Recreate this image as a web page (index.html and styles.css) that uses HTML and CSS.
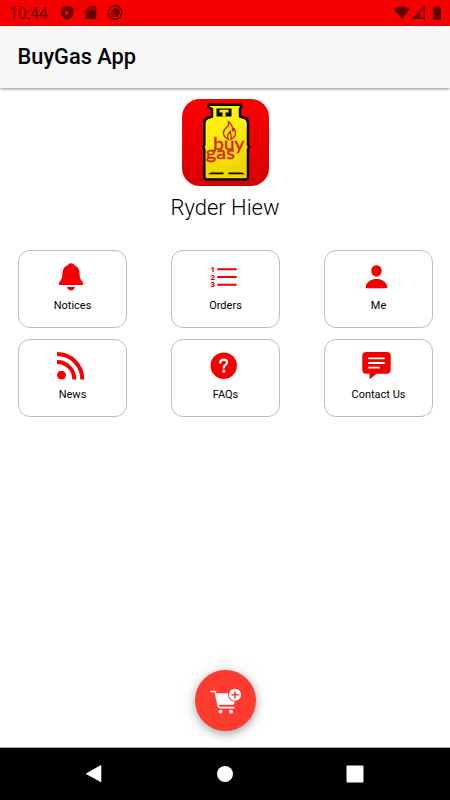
FILE: index.html
```html
<!DOCTYPE html>
<html lang="en">
<head>
<meta charset="utf-8">
<title>BuyGas App</title>
<link rel="stylesheet" href="styles.css">
</head>
<body>
<div class="status">
  <span class="clock">10:44</span>
  <svg class="status-icons" width="64" height="16" viewBox="0 0 64 16">
    <path fill="#650000" fill-rule="evenodd" d="M7.200 .7 13.200 3v4.500c0 3.600-2.500 6-6 7.400-3.500-1.400-6-3.800-6-7.400V3ZM5 4.800v5.800l5-2.900Z"/>
    <path fill="#650000" fill-rule="evenodd" d="M30 1h5q1.200 0 1.200 1.200v10.600q0 1.200-1.200 1.200h-8.200q-1.200 0-1.200-1.200V5.500ZM29.300 2.500v3h1.100v-3Zm2.100 0v3h1.100v-3Zm2.100 0v3h1.100v-3Z"/>
    <circle cx="55.200" cy="7.500" r="6.700" fill="none" stroke="#650000" stroke-width="1.400"/>
    <path d="M51.800 6.500A3.700 3.700 0 0 0 56.500 11.200" fill="none" stroke="#650000" stroke-width="1.200"/>
    <path d="M52.500 5A3.800 3.800 0 0 1 59 9.500L58.300 10.800Z" fill="#650000"/>
    <path d="M52 6 58 11.500" stroke="#650000" stroke-width="1.200"/>
  </svg>
  <svg class="signals" width="50" height="16" viewBox="0 0 50 16">
    <path fill="#650000" d="M1 4.300Q8.500-2.200 16.500 4.300L8.800 14ZM44 1.200h2.500v1.200H48v12h-7.800v-12H42.500V1.200Z"/>
    <path d="M20 13.300 31.300 2v11.300Z" fill="none" stroke="#650000" stroke-width="1.200"/>
    <path d="M20 13.500 27.500 6v7.500Z" fill="#650000"/>
  </svg>
</div>
<header class="bar">BuyGas App</header>
<main class="content">
  <svg class="logo" width="87" height="87" viewBox="0 0 87 87">
    <defs>
      <linearGradient id="red" x2="0" y2="1"><stop stop-color="#f00"/><stop offset="1" stop-color="#d60202"/></linearGradient>
      <linearGradient id="gold" x2=".25" y2="1"><stop stop-color="#fff800"/><stop offset=".45" stop-color="#fbed12"/><stop offset="1" stop-color="#f0d400"/></linearGradient>
    </defs>
    <rect width="87" height="87" rx="18" fill="url(#red)"/>
    <path d="M27 5.800H58.500L59.300 8 58 10V17.500L63 19Q66 20.300 66 24V46L67 48 66 50.500V78Q66 80.500 63.500 80.500H25Q22.300 80.500 22.300 78V50.500L21.300 48 22.300 46V24Q22.300 20.300 25.500 19L30 17.500V10L26.200 8Z" fill="url(#gold)" stroke="#000" stroke-width="2.500" stroke-linejoin="round"/>
    <path d="M34.500 9.500H49.500V17.500H34.500Z"/>
    <path d="M37.500 10.800h9v2.800h-3v4h-3v-4h-3Z" fill="#fff000"/>
    <path d="M26 75.300 29 73.500H41.500V75.300ZM46.500 73.500H60L63 75.300H46.500Z"/>
    <path d="M46.500 40.500C39.500 37 40.500 31.500 44.500 28.500 47 26.500 47 25 46.500 22.800 50.500 25.500 51 28.500 50.500 32 51.700 31.500 52 30 51.800 28.800 55 33.500 54 38 49 40.500 50.300 37 48 35.500 48.300 32.500 45 35.500 44.500 37.500 46.500 40.500Z" fill="none" stroke="#df1709" stroke-width="1.300"/>
    <text class="logo-text" x="31.300" y="50.600" textLength="31" lengthAdjust="spacingAndGlyphs">buy</text>
    <text class="logo-text" x="23.800" y="60" textLength="29" lengthAdjust="spacingAndGlyphs">gas</text>
  </svg>
  <h1 class="name">Ryder Hiew</h1>
  <div class="grid">
    <div class="card">
      <svg class="icon" viewBox="0 0 32 32"><path d="M16 2.200C17.600 2.200 18.800 3 19.200 4.200 23 5.300 24.300 8.300 24.500 12 24.700 17 25.500 18.500 27.500 21 29 23 28 24.100 26.700 24.100H5.300C4 24.100 3 23 4.500 21 6.500 18.500 7.300 17 7.500 12 7.700 8.300 9 5.300 12.800 4.200 13.200 3 14.400 2.200 16 2.200ZM12 26h8q-1 3.600-4 3.600T12 26Z"/></svg>
      <span class="label">Notices</span>
    </div>
    <div class="card">
      <svg class="icon" viewBox="0 0 32 32"><path class="line" d="M10 8.300H28M10 16H28M10 23.700H28"/><text class="digit" x="2.500" y="11">1</text><text class="digit" x="2.500" y="18.700">2</text><text class="digit" x="2.500" y="26.400">3</text></svg>
      <span class="label">Orders</span>
    </div>
    <div class="card">
      <svg class="icon" viewBox="0 0 32 32"><path d="M15.500 4.200C18.500 4.200 20.700 6.500 20.700 9.700S18.500 15.500 15.500 15.500 10.300 12.900 10.300 9.700 12.500 4.200 15.500 4.200ZM6 27.200C4.800 27.200 4.500 26.500 4.700 25.500 5.700 20.500 10.500 18 15.500 18S25.300 20.500 26.300 25.500C26.500 26.500 26.200 27.200 25 27.200Z"/></svg>
      <span class="label">Me</span>
    </div>
    <div class="card">
      <svg class="icon" viewBox="0 0 32 32"><circle cx="6.500" cy="25.200" r="4.400"/><path class="arc" d="M2 12A17.300 17.300 0 0 1 19.300 29.500M2 4A25.300 25.300 0 0 1 27.300 29.500"/></svg>
      <span class="label">News</span>
    </div>
    <div class="card">
      <svg class="icon" viewBox="0 0 32 32"><circle cx="15.700" cy="15.700" r="13.200"/><path class="mark" d="M12.300 12.700C12.300 8.500 19.100 8.600 19.100 12.300 19.100 14.900 15.800 14.900 15.800 17.600"/><circle cx="15.700" cy="21.200" r="1.600" fill="#fff"/></svg>
      <span class="label">FAQs</span>
    </div>
    <div class="card">
      <svg class="icon" viewBox="0 0 32 32"><path d="M5.200 2H25.800Q29.700 2 29.700 6V19.700Q29.700 23.700 25.800 23.700H15.500L9.800 28.600Q8.500 29.400 8.500 28V23.700H5.200Q1.300 23.700 1.300 19.700V6Q1.300 2 5.200 2Z"/><path class="msg" d="M8 8.300H23M8 13H23M8 17.700H18"/></svg>
      <span class="label">Contact Us</span>
    </div>
  </div>
  <div class="fab">
    <svg width="61" height="61" viewBox="0 0 61 61">
      <path d="M15.800 21.500H20.200L23.500 36.500Q24 37.700 25.500 37.700H38.500M23.800 34H37.500Q38.500 34 38.800 32.500" fill="none" stroke="#fff" stroke-width="1.700" stroke-linecap="round" stroke-linejoin="round"/>
      <path d="M21 23.200H33Q32.500 30.500 39.500 31.800L38.800 34H23.800Z" fill="#fff"/>
      <circle cx="25.500" cy="41.700" r="1.900" fill="#fff"/><circle cx="36" cy="41.700" r="1.900" fill="#fff"/>
      <circle cx="40" cy="24.800" r="6.100" fill="#fff"/>
      <path d="M40 21.200v7.200M36.400 24.800h7.200" stroke="#ff3b30" stroke-width="1.600"/>
    </svg>
  </div>
</main>
<nav class="nav">
  <svg width="18" height="20" viewBox="0 0 18 20"><path d="M1.500 9.300 15.500 1.300q.8-.3.800.5v15.600q0 .8-.8.500L1.500 10.200q-.8-.5 0-.9Z"/></svg>
  <svg width="18" height="18" viewBox="0 0 18 18"><circle cx="9" cy="9" r="8"/></svg>
  <svg width="18" height="18" viewBox="0 0 18 18"><rect x=".5" y=".5" width="17" height="17" rx="1"/></svg>
</nav>
</body>
</html>
```
FILE: styles.css
```css
* { box-sizing: border-box; }

body {
  margin: 0;
  height: 800px;
  display: flex;
  flex-direction: column;
  overflow: hidden;
  background: #fff;
  color: #000;
  font-family: Roboto, sans-serif;
}

svg { display: block; flex: none; }

.status {
  height: 26px;
  display: flex;
  align-items: center;
  padding: 0 7px 0 9px;
  background: #f40000;
  flex: none;
}

.clock {
  width: 51px;
  font-size: 16px;
  line-height: 26px;
  letter-spacing: -0.3px;
  color: #650000;
  padding-top: 2px;
}

.signals { margin-left: auto; }

.bar {
  height: 62px;
  flex: none;
  padding-left: 17.5px;
  background: #f7f7f7;
  font-size: 21.8px;
  font-weight: 500;
  line-height: 62px;
  box-shadow: 0 1px 3px rgba(0, 0, 0, 0.45);
}

.content {
  flex: 1;
  display: flex;
  flex-direction: column;
  align-items: center;
  padding: 10.5px 17px 16.5px;
}

.logo { margin-left: 1px; }

.logo-text {
  font: 18px Lato, sans-serif;
  fill: #df1709;
  stroke: #df1709;
  stroke-width: 0.4px;
}

.name {
  margin: 8px 0 28.5px;
  font-size: 22px;
  line-height: 28px;
  font-weight: 300;
}

.grid {
  width: 415px;
  margin-left: 1px;
  display: grid;
  grid-template-columns: repeat(3, 109px);
  grid-auto-rows: 78px;
  justify-content: space-between;
  row-gap: 10.5px;
}

.card {
  display: flex;
  flex-direction: column;
  align-items: center;
  padding-top: 10px;
  border: 1px solid #bdbdbd;
  border-radius: 12px;
}

.icon {
  width: 32px;
  height: 32px;
  margin-right: 4px;
  fill: #f40000;
}

.line { stroke: #f40000; stroke-width: 1.9; stroke-linecap: round; }
.digit { font: 900 7.9px Roboto, sans-serif; }
.arc { fill: none; stroke: #f40000; stroke-width: 4; }
.mark { fill: none; stroke: #fff; stroke-width: 2.3; stroke-linecap: round; }
.msg { stroke: #fff; stroke-width: 1.8; stroke-linecap: round; }

.label {
  margin-top: 5px;
  font-size: 11px;
  line-height: 15px;
}

.fab {
  width: 61px;
  height: 61px;
  margin-top: auto;
  border-radius: 50%;
  background: #ff3b30;
  box-shadow: 0 3px 9px rgba(0, 0, 0, 0.32), 0 0 22px rgba(0, 0, 0, 0.08);
}

.nav {
  height: 53px;
  flex: none;
  display: flex;
  justify-content: space-between;
  align-items: center;
  padding: 0 86px 0 85px;
  border-top: 1px solid #aaa;
  background: #000;
  fill: #fff;
}
```
